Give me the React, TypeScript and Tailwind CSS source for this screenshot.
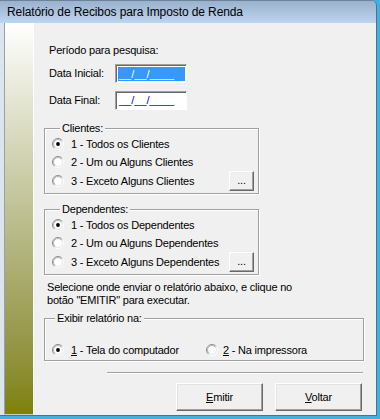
import React from "react";

const font = "font-['Liberation_Sans',Arial,sans-serif]";

function Radio({ checked }: { checked?: boolean }) {
  return (
    <svg width="12" height="12" viewBox="0 0 12 12" className="shrink-0">
      <defs>
        <linearGradient id="rOuter" x1="0" y1="0" x2="1" y2="1">
          <stop offset="0.45" stopColor="#8c8c8c" />
          <stop offset="0.6" stopColor="#ffffff" />
        </linearGradient>
        <linearGradient id="rInner" x1="0" y1="0" x2="1" y2="1">
          <stop offset="0.45" stopColor="#b0b0b0" />
          <stop offset="0.6" stopColor="#e6e6e6" />
        </linearGradient>
      </defs>
      <circle cx="6" cy="6" r="5.5" fill="none" stroke="url(#rOuter)" />
      <circle cx="6" cy="6" r="4.5" fill="#ffffff" stroke="url(#rInner)" />
      {checked && <circle cx="6" cy="6" r="1.9" fill="#000000" />}
    </svg>
  );
}

function DotsButton() {
  return (
    <button className="ml-auto mr-[4px] w-[25px] h-[20px] shrink-0 flex items-end justify-center pb-[4px] bg-[#f0f0f0] border border-t-white border-l-white border-r-[#696969] border-b-[#696969] shadow-[inset_-1px_-1px_0_#a0a0a0] text-[11px] leading-[11px]">
      ...
    </button>
  );
}

function Group({
  title,
  legendOffset,
  width,
  children,
  className = "",
}: {
  title: string;
  legendOffset: string;
  width: string;
  children: React.ReactNode;
  className?: string;
}) {
  return (
    <fieldset
      className={`${width} ${className} m-0 px-0 pt-0 border border-[#a0a0a0] shadow-[1px_1px_0_#ffffff,inset_1px_1px_0_#ffffff]`}
    >
      <legend className={`${legendOffset} px-[2px] bg-[#f0f0f0] leading-[13px]`}>{title}</legend>
      {children}
    </fieldset>
  );
}

function Option({ checked, label, tall, extra }: { checked?: boolean; label: string; tall?: boolean; extra?: React.ReactNode }) {
  return (
    <div className={`${tall ? "h-[20px]" : "h-[18px]"} flex items-center pl-[7px] gap-[7px]`}>
      <Radio checked={checked} />
      <span className="whitespace-nowrap">{label}</span>
      {extra}
    </div>
  );
}

function Button({ mn, rest }: { mn: string; rest: string }) {
  return (
    <button className="w-[87px] h-[28px] flex items-center justify-center bg-[#f0f0f0] border border-t-white border-l-white border-r-[#696969] border-b-[#696969] shadow-[inset_-1px_-1px_0_#a0a0a0,inset_1px_1px_0_#e3e3e3] text-[11px]">
      <span>
        <u className="underline-offset-[1px]">{mn}</u>
        {rest}
      </span>
    </button>
  );
}

export default function App() {
  return (
    <div className={`w-[380px] h-[419px] flex flex-col bg-[#3bb4e4] ${font} text-black overflow-hidden`}>
      <div className="flex-1 flex flex-col mr-[3px] mb-[3px] border-r border-b border-[#50708c] rounded-tr-[6px] overflow-hidden">
        {/* Title bar */}
        <div className="h-[23px] shrink-0 flex items-center pl-[7px] pb-[1px] border-t border-[#6f8298] bg-gradient-to-b from-[#9ab2ce] to-[#bed5ee] text-[12px] tracking-[-0.1px]">
          Relatório de Recibos para Imposto de Renda
        </div>

        <div className="flex-1 flex bg-[#dce4ec]">
          {/* Left frame and side panel */}
          <div className="w-[4px] shrink-0" />
          <div className="w-[30px] shrink-0 border-l border-r border-b border-l-[#8ea2b8] border-r-white border-b-[#c6d0da] bg-gradient-to-b from-white to-[#808000]" />

          {/* Content */}
          <div className="flex-1 bg-[#f0f0f0] pl-[10px] pt-[21px] flex flex-col text-[11px] leading-[13px] tracking-[-0.2px]">
            <p className="pl-[5px] h-[13px]">Período para pesquisa:</p>

            <div className="mt-[7px] h-[19px] flex items-center pl-[5px]">
              <span className="w-[66px]">Data Inicial:</span>
              <div className="w-[72px] h-[19px] border border-t-[#a0a0a0] border-l-[#a0a0a0] border-r-white border-b-white shadow-[inset_1px_1px_0_#696969] bg-white pt-[2px] pl-[2px] pr-[1px] pb-[1px]">
                <div className="h-full bg-[#3399ff] text-white flex items-end pl-[1px] text-[11px] leading-[13px] tracking-[0px]">
                  __/__/____
                </div>
              </div>
            </div>

            <div className="mt-[8px] h-[19px] flex items-center pl-[5px]">
              <span className="w-[66px]">Data Final:</span>
              <div className="w-[72px] h-[19px] border border-t-[#a0a0a0] border-l-[#a0a0a0] border-r-white border-b-white shadow-[inset_1px_1px_0_#696969] bg-white flex items-end pl-[3px] pb-[2px] text-[#0000ff] tracking-[0px]">
                __/__/____
              </div>
            </div>

            <Group title="Clientes:" legendOffset="ml-[15px]" width="w-[215px]" className="mt-[12px] pb-[2px]">
              <Option checked label="1 - Todos os Clientes" />
              <Option label="2 - Um ou Alguns Clientes" />
              <Option label="3 - Exceto Alguns Clientes" tall extra={<DotsButton />} />
            </Group>

            <Group title="Dependentes:" legendOffset="ml-[15px]" width="w-[215px]" className="mt-[9px] pb-[2px]">
              <Option checked label="1 - Todos os Dependentes" />
              <Option label="2 - Um ou Alguns Dependentes" />
              <Option label="3 - Exceto Alguns Dependentes" tall extra={<DotsButton />} />
            </Group>

            <p className="mt-[6px] pl-[3px]">
              Selecione onde enviar o relatório abaixo, e clique no
              <br />
              botão "EMITIR" para executar.
            </p>

            <Group title="Exibir relatório na:" legendOffset="ml-[10px]" width="w-[320px]" className="mt-[5px] pb-[1px]">
              <div className="mt-[16px] h-[18px] flex items-center pl-[7px]">
                <div className="w-[154px] flex items-center gap-[7px]">
                  <Radio checked />
                  <span className="whitespace-nowrap">
                    <u className="underline-offset-[1px]">1</u> - Tela do computador
                  </span>
                </div>
                <div className="flex items-center gap-[5px]">
                  <Radio />
                  <span className="whitespace-nowrap">
                    <u className="underline-offset-[1px]">2</u> - Na impressora
                  </span>
                </div>
              </div>
            </Group>

            <div className="mt-[11px] ml-[63px] w-[256px] h-[2px] border-t border-b border-t-[#a0a0a0] border-b-white" />

            <div className="mt-[9px] ml-[132px] flex gap-[12px]">
              <Button mn="E" rest="mitir" />
              <Button mn="V" rest="oltar" />
            </div>
          </div>
        </div>
      </div>
    </div>
  );
}
